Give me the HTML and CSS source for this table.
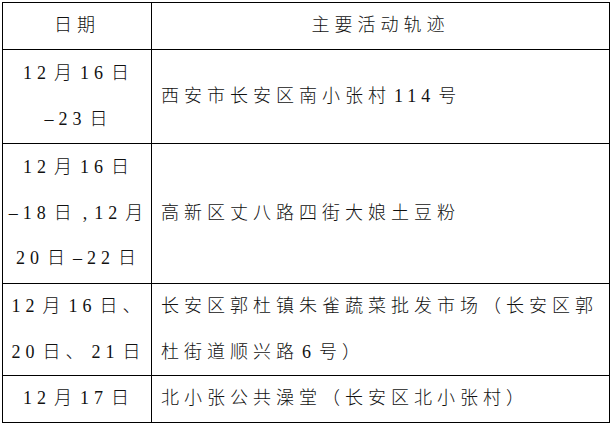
FILE: index.html
```html
<!DOCTYPE html>
<html lang="zh-CN">
<head>
<meta charset="utf-8">
<title>主要活动轨迹</title>
<link rel="stylesheet" href="styles.css">
</head>
<body>
<table class="trace">
  <colgroup><col class="c-date"><col class="c-place"></colgroup>
  <thead>
    <tr class="r-head"><th>日期</th><th>主要活动轨迹</th></tr>
  </thead>
  <tbody>
    <tr class="r1">
      <td class="date"><span class="n">12</span>月<span class="n">16</span>日<br><span class="n">–23</span>日</td>
      <td class="place">西安市长安区南小张村<span class="n">114</span>号</td>
    </tr>
    <tr class="r2">
      <td class="date"><span class="n">12</span>月<span class="n">16</span>日<br><span class="n">–18</span>日<span class="cm">,</span><span class="n tight">12</span>月<br><span class="n">20</span>日<span class="n">–22</span>日</td>
      <td class="place">高新区丈八路四街大娘土豆粉</td>
    </tr>
    <tr class="r3">
      <td class="date"><span class="n">12</span>月<span class="n">16</span>日、<br><span class="n">20</span>日、<span class="n">21</span>日</td>
      <td class="place">长安区郭杜镇朱雀蔬菜批发市场（长安区郭<br>杜街道顺兴路<span class="n">6</span>号）</td>
    </tr>
    <tr class="r4">
      <td class="date"><span class="n">12</span>月<span class="n">17</span>日</td>
      <td class="place">北小张公共澡堂（长安区北小张村）</td>
    </tr>
  </tbody>
</table>
</body>
</html>
```

FILE: styles.css
```css
html, body {
  margin: 0;
  padding: 0;
  background: #ffffff;
}

body {
  padding: 2px 0 0 2px;
}

.trace {
  border-collapse: collapse;
  table-layout: fixed;
  width: 607px;
  font-family: "Liberation Serif", "Noto Sans CJK SC", serif;
  font-size: 18px;
  font-weight: 300;
  letter-spacing: 5px;
  color: #111111;
}

.c-date { width: 149px; }
.c-place { width: 458px; }

.trace th,
.trace td {
  border: 1px solid #000000;
  padding: 0;
  line-height: 45.5px;
  vertical-align: middle;
  white-space: nowrap;
  font-weight: 300;
}

.trace th { text-align: center; }

.date { text-align: center; }

.place {
  text-align: left;
  padding-left: 9px !important;
}

.n { margin: 0 3px; }
.n.tight { margin-left: 0; }

.cm {
  margin-left: 6px;
  letter-spacing: 7px;
}

.r-head { height: 47px; }
.r1 { height: 94px; }
.r2 { height: 140px; }
.r3 { height: 91px; }
.r4 { height: 47px; }
```
